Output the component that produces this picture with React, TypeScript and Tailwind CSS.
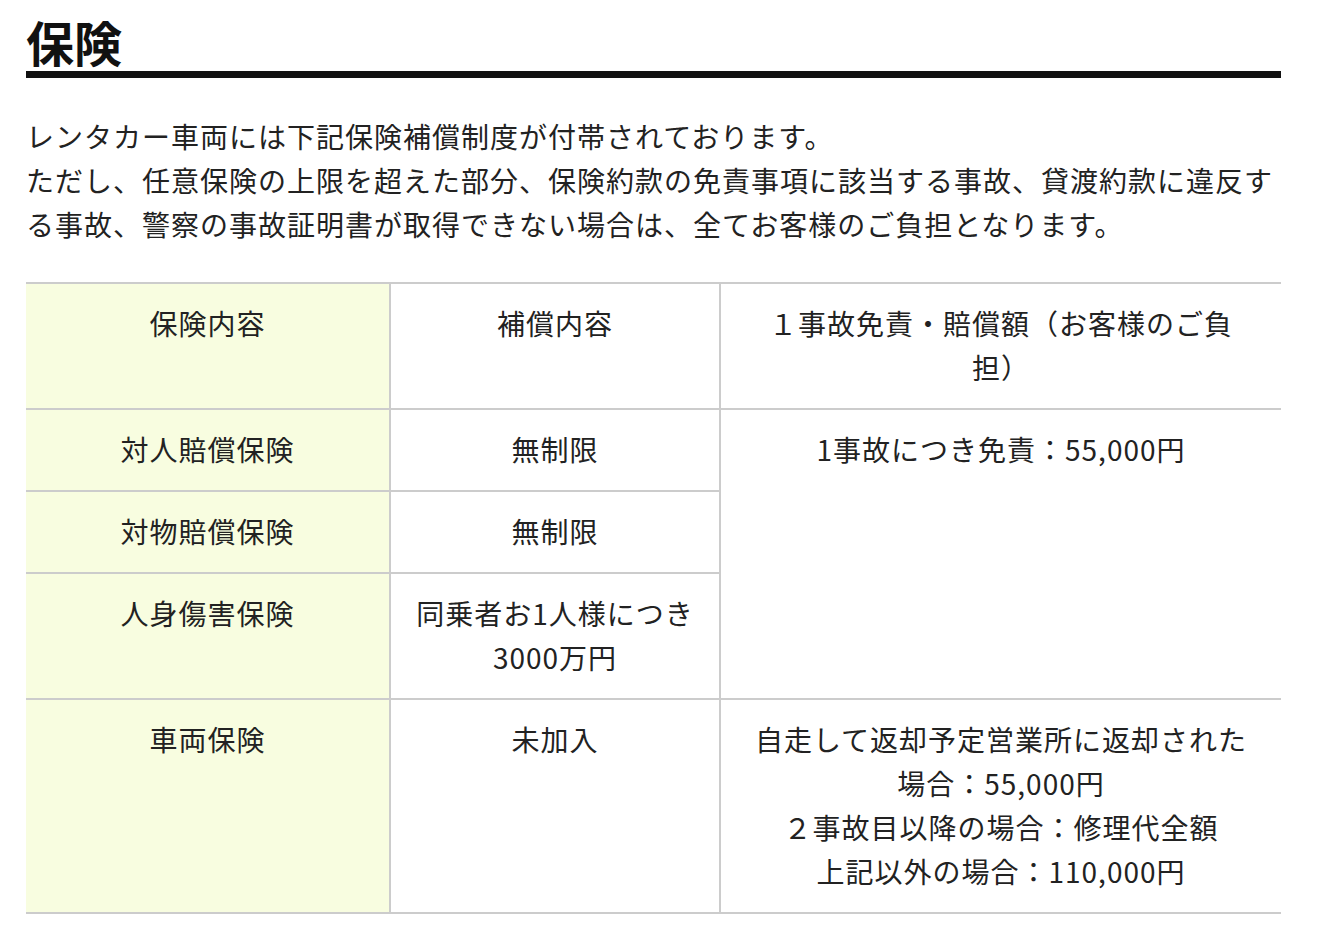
import React from "react";

const font = { fontFamily: '"Noto Sans CJK JP", "Noto Sans", sans-serif' };

export default function App() {
  const td = "border-2 border-[#cccccc] align-top text-center px-[20px] pt-[17px] pb-[19px]";
  const th = td + " bg-[#f8fde0] border-l-0";
  const td3 = "border-2 border-[#cccccc] border-r-0 align-top text-center px-[30px] pt-[17px] pb-[19px]";
  return (
    <div className="w-[1320px] min-h-[934px] bg-white text-[#222222]" style={font}>
      <div className="ml-[26px] w-[1255px]">
        <h1 className="pt-[12px] pb-[1px] text-[48px] leading-[58px] font-bold text-[#111111] border-b-[7px] border-[#111111]">
          保険
        </h1>
        <p className="mt-[36px] text-[28px] leading-[44px] tracking-[1px]">
          レンタカー車両には下記保険補償制度が付帯されております。
          <br />
          ただし、任意保険の上限を超えた部分、保険約款の免責事項に該当する事故、貸渡約款に違反する事故、警察の事故証明書が取得できない場合は、全てお客様のご負担となります。
        </p>
        <table className="mt-[36px] w-[1255px] table-fixed border-collapse text-[28px] leading-[44px] tracking-[1px]">
          <colgroup>
            <col className="w-[364px]" />
            <col className="w-[330px]" />
            <col className="w-[561px]" />
          </colgroup>
          <tbody>
            <tr>
              <td className={th}>保険内容</td>
              <td className={td}>補償内容</td>
              <td className={td3}>１事故免責・賠償額（お客様のご負担）</td>
            </tr>
            <tr>
              <td className={th}>対人賠償保険</td>
              <td className={td}>無制限</td>
              <td className={td3} rowSpan={3}>
                1事故につき免責：55,000円
              </td>
            </tr>
            <tr>
              <td className={th}>対物賠償保険</td>
              <td className={td}>無制限</td>
            </tr>
            <tr>
              <td className={th}>人身傷害保険</td>
              <td className={td}>同乗者お1人様につき3000万円</td>
            </tr>
            <tr>
              <td className={th}>車両保険</td>
              <td className={td}>未加入</td>
              <td className={td3}>
                自走して返却予定営業所に返却された場合：55,000円
                <br />
                ２事故目以降の場合：修理代全額
                <br />
                上記以外の場合：110,000円
              </td>
            </tr>
          </tbody>
        </table>
      </div>
    </div>
  );
}
